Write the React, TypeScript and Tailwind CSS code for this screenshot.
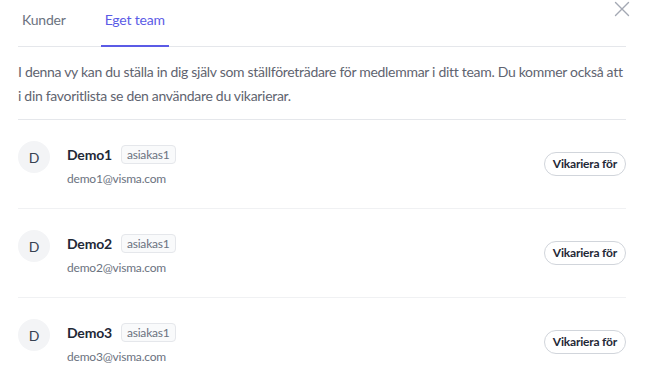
const members = [
  { name: "Demo1", email: "demo1@visma.com" },
  { name: "Demo2", email: "demo2@visma.com" },
  { name: "Demo3", email: "demo3@visma.com" },
];

export default function App() {
  return (
    <div className="relative h-[386px] w-[649px] overflow-hidden bg-white font-['Lato','Liberation_Sans',sans-serif] tracking-[-0.2px]">
      <button className="absolute left-[614px] top-[1px] text-[#a3a8b3]">
        <svg width="16" height="16" viewBox="0 0 16 16" fill="none" stroke="currentColor" strokeWidth="1.4" strokeLinecap="round">
          <path d="M1.5 1.5l13 13M14.5 1.5l-13 13" />
        </svg>
      </button>

      <div className="mx-[18px] w-[608px]">
        {/* tabs */}
        <div className="flex h-[47px] gap-[31px] border-b border-[#e5e7eb]">
          <div className="px-[4px] pt-[9px] text-[14px] text-[#6b7280]">Kunder</div>
          <div className="relative px-[4px] pt-[9px] text-[14px] text-[#5b5be6]">
            Eget team
            <span className="absolute inset-x-0 -bottom-px h-[2px] bg-[#5b5be6]" />
          </div>
        </div>

        <p className="whitespace-nowrap border-b border-[#e5e7eb] pb-[11px] pt-[13px] text-[14px] leading-[24px] tracking-[-0.3px] text-[#5f6470]">
          I denna vy kan du ställa in dig själv som ställföreträdare för medlemmar i ditt team. Du kommer också att
          <br />
          i din favoritlista se den användare du vikarierar.
        </p>

        {members.map((m) => (
          <div
            key={m.name}
            className="flex h-[89px] items-start border-b border-[#f0f1f3] pt-[21px] last:border-b-0"
          >
            <div className="flex h-[32px] w-[32px] shrink-0 items-center justify-center rounded-full bg-[#f3f4f6] text-[14px] text-[#374151]">
              D
            </div>
            <div className="ml-[17px] flex flex-1 flex-col">
              <div className="flex h-[26px] items-center gap-[9px]">
                <span className="text-[14px] font-bold text-[#1f2937]">{m.name}</span>
                <span className="rounded-[4px] border border-[#e5e7eb] bg-[#f9fafb] px-[5px] text-[12px] leading-[17px] text-[#6b7280]">
                  asiakas1
                </span>
              </div>
              <span className="mt-[3px] text-[12px] text-[#6b7280]">{m.email}</span>
            </div>
            <button className="mt-[11px] h-[24px] rounded-full border border-[#d1d5db] bg-white px-[8px] text-[12px] font-bold text-[#1f2937]">
              Vikariera för
            </button>
          </div>
        ))}
      </div>
    </div>
  );
}
